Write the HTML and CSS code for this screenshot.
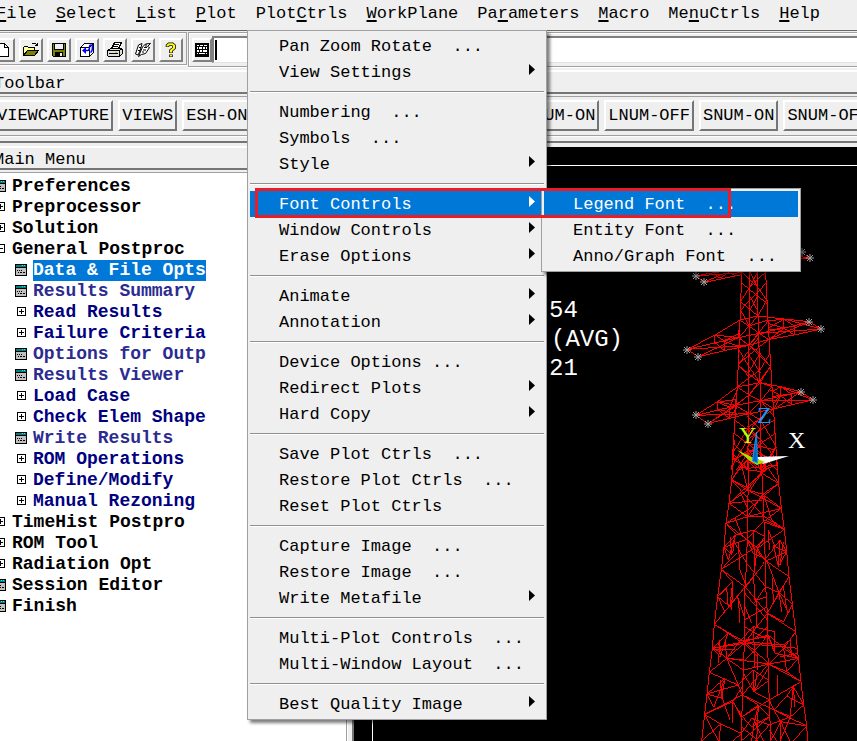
FILE: index.html
```html
<!DOCTYPE html>
<html lang="en">
<head>
<meta charset="utf-8">
<title>Postprocessor</title>
<link rel="stylesheet" href="styles.css">
</head>
<body>
<svg class="defs" aria-hidden="true">
  <symbol id="arrow" viewBox="0 0 6 11"><path d="M0 0 6 5.5 0 11z" fill="currentColor"/></symbol>
  <symbol id="form" viewBox="0 0 12 12" shape-rendering="crispEdges"><path fill="#000" d="M0 0h12v12H0z"/><path fill="#c0c0c0" d="M1 4h10v7H1z"/><path fill="#008080" d="M1 1h10v2H1z"/><path fill="#0ff" d="M7 1h1v1H7zM9 1h1v1H9z"/><path fill="#000" d="M2 6h1v1H2zM4 6h1v1H4zM6 6h1v1H6zM3 8h1v1H3zM5 8h2v1H5zM8 8h2v1H8z"/></symbol>
  <symbol id="plus" viewBox="0 0 12 12" shape-rendering="crispEdges"><path fill="none" stroke="#000" d="M2.5 1.5h8v8h-8zM4 5.5h5M6.500 3v5"/></symbol>
  <symbol id="minus" viewBox="0 0 12 12" shape-rendering="crispEdges"><path fill="none" stroke="#000" d="M2.5 1.500h8v8h-8zM4 5.500h5"/></symbol>
  <symbol id="star" viewBox="-5 -5 10 10" overflow="visible"><path fill="none" stroke="#a0a0a0" d="M-4 0h8M0-4v8M-3-3 3 3M3-3-3 3"/></symbol>
</svg>
<div class="app">
  <nav class="menubar" aria-label="Main">
    <a href="#"><u>F</u>ile</a><a href="#"><u>S</u>elect</a><a href="#"><u>L</u>ist</a><a href="#"><u>P</u>lot</a><a href="#">Plot<u>C</u>trls</a><a href="#"><u>W</u>orkPlane</a><a href="#">Pa<u>r</u>ameters</a><a href="#"><u>M</u>acro</a><a href="#">Me<u>n</u>uCtrls</a><a href="#"><u>H</u>elp</a>
  </nav>

  <div class="command-row">
    <div class="tools">
      <button class="tool" aria-label="New"><svg viewBox="0 0 18 18" shape-rendering="crispEdges"><path fill="#fff" stroke="#000" d="M3.500 2.500h7l4 4v9h-11zM10.500 2.500v4h4"/></svg></button>
      <button class="tool" aria-label="Open"><svg viewBox="0 0 18 18" shape-rendering="crispEdges"><path fill="#ff9" stroke="#000" d="M1.500 14.500v-8l1-1h3l1 1h6v3h-6z"/><path fill="#808000" stroke="#000" d="M1.500 14.500l4-5h11l-4 5z"/><path fill="none" stroke="#000" d="M9.500 3.500l1-1h3l2 2M15.500 2v3M13 4.500h3"/></svg></button>
      <button class="tool" aria-label="Save"><svg viewBox="0 0 18 18" shape-rendering="crispEdges"><path fill="#808000" stroke="#000" d="M2.500 2.500h13v13h-12l-1-1z"/><path fill="#efefef" stroke="#000" d="M4.500 2.500h9v6h-9z"/><path d="M5 11h8v5H5z"/><path fill="#efefef" d="M10 12h2v3h-2z"/></svg></button>
      <button class="tool" aria-label="Rotate view"><svg viewBox="0 0 18 18"><path fill="#fff" stroke="#000" shape-rendering="crispEdges" d="M2.500 6.500h9v9h-9zM2.500 6.500l4-4h9l-4 4M15.500 2.500v9l-4 4"/><path fill="none" stroke="#00f" stroke-width="1.500" d="M6 9.500h3.500c2 0 2-2 2-4 0-2 3-2 3 0 0 3 0 5-2 6"/><path fill="#00f" d="M4 9.500 8 6v7z"/></svg></button>
      <button class="tool" aria-label="Print"><svg viewBox="0 0 18 18" shape-rendering="crispEdges"><path fill="#fff" stroke="#000" d="M5.500 7.500l3-6h7l-3 6z"/><path fill="none" stroke="#000" d="M8 3.500h5M7 5.500h5"/><path fill="#ddd" stroke="#000" d="M1.500 9.500l3-2h11l1 1v4l-3 3h-11l-1-1zM1.500 9.500h12v5M13.500 9.500l3-2M3 12.500h9"/><path fill="#cc0" d="M9 11h2v1H9z"/></svg></button>
      <button class="tool" aria-label="Report"><svg viewBox="0 0 18 18"><path fill="#fff" stroke="#000" d="M4.500 4 8 2.500 6 10l-2 4-2.500-1zM8.500 6l3-3 5-.5-3 3 2 1-4 6-4 1-3 2z"/><path fill="none" stroke="#000" d="M5 6.500h2M4 9.500h2M10 6.500h3M9 9h3M8 11h2M12 3v3"/></svg></button>
      <button class="tool" aria-label="Help"><svg viewBox="0 0 18 18"><path fill="none" stroke="#000" stroke-width="3.500" d="M5.500 6V4.500L7 3.200h3.500L12 4.500V7L9 9.500V12M9 13.500V16"/><path fill="none" stroke="#ff0" stroke-width="2" d="M5.500 5.500v-1L7 3.200h3.500L12 4.500V7L9 9.500v2M9 14v1.500"/></svg></button>
    </div>
    <div class="command">
      <button class="tool" aria-label="Keyboard entry"><svg viewBox="0 0 18 18" shape-rendering="crispEdges"><path d="M1 1h16v16H1z"/><path fill="#fff" d="M3 3h3v2H3zM7 3h3v2H7zM11 3h4v2h-4zM3 6h2v2H3zM6 6h3v2H6zM10 6h2v2h-2zM13 6h2v2h-2zM3 9h3v2H3zM7 9h2v2H7zM10 9h3v2h-3zM14 9h1v2h-1zM3 12h2v2H3zM6 12h6v2H6zM13 12h2v2h-2z"/></svg></button>
      <div class="field"><span class="caret"></span><input type="text" aria-label="Command"></div>
    </div>
  </div>

  <h2 class="title">Toolbar</h2>
  <div class="toolbar">
    <button>VIEWCAPTURE</button><button>VIEWS</button><button>ESH-ON</button><button>ESH-OFF</button><button>NNUM-ON</button><button>NNUM-OFF</button><button>LNUM-ON</button><button>LNUM-OFF</button><button>SNUM-ON</button><button>SNUM-OFF</button>
  </div>
  <div class="groove"></div>

  <main class="work">
    <section class="side">
      <h2 class="title">Main Menu</h2>
      <ul class="tree">
        <li><svg><use href="#form"/></svg><span>Preferences</span></li>
        <li><svg><use href="#plus"/></svg><span>Preprocessor</span></li>
        <li><svg><use href="#plus"/></svg><span>Solution</span></li>
        <li><svg><use href="#minus"/></svg><span>General Postproc</span></li>
        <li class="child leaf selected"><svg><use href="#form"/></svg><span>Data &amp; File Opts</span></li>
        <li class="child leaf"><svg><use href="#form"/></svg><span>Results Summary</span></li>
        <li class="child"><svg><use href="#plus"/></svg><span>Read Results</span></li>
        <li class="child"><svg><use href="#plus"/></svg><span>Failure Criteria</span></li>
        <li class="child leaf"><svg><use href="#form"/></svg><span>Options for Outp</span></li>
        <li class="child leaf"><svg><use href="#form"/></svg><span>Results Viewer</span></li>
        <li class="child"><svg><use href="#plus"/></svg><span>Load Case</span></li>
        <li class="child"><svg><use href="#plus"/></svg><span>Check Elem Shape</span></li>
        <li class="child leaf"><svg><use href="#form"/></svg><span>Write Results</span></li>
        <li class="child"><svg><use href="#plus"/></svg><span>ROM Operations</span></li>
        <li class="child"><svg><use href="#plus"/></svg><span>Define/Modify</span></li>
        <li class="child"><svg><use href="#plus"/></svg><span>Manual Rezoning</span></li>
        <li><svg><use href="#plus"/></svg><span>TimeHist Postpro</span></li>
        <li><svg><use href="#plus"/></svg><span>ROM Tool</span></li>
        <li><svg><use href="#plus"/></svg><span>Radiation Opt</span></li>
        <li><svg><use href="#form"/></svg><span>Session Editor</span></li>
        <li><svg><use href="#form"/></svg><span>Finish</span></li>
      </ul>
    </section>
    <div class="divider"></div>
    <section class="graphics" aria-label="Graphics window">
      <div class="frame">
        <svg class="plot" viewBox="373 166 484 575">
          <g class="legend"><text x="549" y="317">54</text><text x="551" y="346">(AVG)</text><text x="549" y="375">21</text></g>
          <!-- tower head and cross-arms -->
          <g class="wire" transform="translate(660 240) scale(.33333)">
            <path d="M246 80 240 240 232 440 222 580 215 690M316 80 324 240 336 440 342 530 352 690M270 80 267 316 267 520 262 690M292 80 294 230 302 480 303 690"/>
            <path d="M246 97 292 140 320 180M316 97 270 140 242 185M246 130 320 190M318 130 242 210M242 185 294 228 320 180M242 210 267 258 324 240M270 97 292 140M292 97 270 140M270 170 292 210M292 170 270 210M240 240 298 280 327 300M324 240 267 258 237 293M267 258 298 280 267 316M294 228 267 258M240 240 235 293 267 316 324 243"/>
            <path d="M237 293 300 340 331 380M327 298 267 345 234 375M267 316 331 380 300 428M298 290 234 375 267 410M237 330 267 380 302 430M330 340 300 390 232 440M234 375 300 428 336 440M331 380 267 465M267 345 302 400M300 340 267 395"/>
            <path d="M232 441 267 465 302 482 342 507M336 440 302 482 267 521 226 496M232 441 226 496 267 521M300 428 267 465 226 496M302 482 342 530M226 496 302 540 348 620M340 507 267 560 218 640M224 540 303 600 350 660M342 540 262 600 216 680M222 580 303 640 352 690M345 580 262 640 230 690M262 560 303 600 262 650M303 560 262 620 303 690M262 530 303 570M303 530 262 580M218 640 262 690M348 620 303 690M217 660 303 620M350 650 262 670M240 690 262 660 290 690M320 690 303 660"/>
            <path d="M108 108 160 98 245 88M108 108 133 127 245 104M108 108 245 98M160 98 180 115 205 98 225 106M133 127 180 105M422 36 449 55 422 50M422 57 449 55"/>
            <path d="M82 328 165 285 240 240 293 228 372 237 448 245 484 267 403 285 327 298 267 316 193 332 115 350 82 328 190 303 235 293 298 280 402 258 448 245M82 328 267 316M115 350 235 293M484 267 372 237 324 243M484 267 298 280M448 245 327 298M165 285V308L193 332V303L165 285 237 293M190 303 240 320 267 316M372 237V265L403 285V258L372 237 324 265M327 298 372 265 324 250M240 280 190 303M324 270 372 265"/>
            <path d="M108 526 172 485 232 441 300 428 362 440 423 455 459 480 400 493 342 507 267 521 208 535 143 551 108 526 208 502 226 496 302 482 394 462 423 455M108 526 267 521M143 551 226 496M143 551 208 512 267 465M459 480 362 440 336 455M459 480 302 482M423 455 342 507M172 485V508L208 535V502L172 485 226 496M362 440V467L394 493V462L362 440M342 507 362 467 330 450M172 508 230 520M362 467 340 490M232 450 208 502M232 500 208 535M180 485 230 478M336 470 390 462"/>
          </g>
          <!-- tower body -->
          <g class="wire" transform="translate(680 440) scale(.33333)">
            <path d="M163 0 155 120 147 190 138 250 132 322 124 388 113 470 103 553 97 625 88 697 81 762 74 823 65 903M286 0 296 130 304 205 313 268 320 335 327 410 337 492 347 575 355 655 363 725 371 795 380 858 383 903M206 40 203 230 200 370 195 440 193 610 190 690 187 770 184 903M243 40 250 200 254 290 257 440 262 520 265 720 268 780 272 903"/>
            <path d="M161 10 206 60 243 90 293 75M290 20 245 95 206 145 155 120M163 60 206 85 290 75M163 60 206 30 286 60M185 78 206 90 245 95 265 85M243 10 185 78 155 120M286 30 206 10M155 120 185 75 203 150M296 130 265 85 245 100 203 160M245 100 296 130 248 163 203 150 155 120M147 190 203 150 304 205M147 190 245 100M296 130 203 210 138 250M155 120 250 228 313 268M147 190 203 230 248 163 304 205 203 230 138 250M304 205 250 245 200 298M147 190 245 180M248 163 304 205M313 268 250 228 203 230M180 155 205 210M250 160 275 240 313 268"/>
            <path d="M138 250 200 298 254 360 327 410M313 268 254 240 200 298 132 322M138 250 170 285 220 270 254 290M132 322 200 298 232 325 313 268M165 235 185 285 200 298M166 285 132 322 145 360 166 285 158 340M150 290 155 345 132 322M175 310 180 390 200 440M200 370 165 310M220 270 225 400M232 325 254 360 285 320 320 335M265 270 268 330M254 290 232 325 222 400M285 320 320 335 295 380 300 300 320 335M265 270 285 320 300 300M280 315 295 380M310 305 300 375M200 298 220 340 254 355M170 340 124 388M250 245 313 268"/>
            <path d="M124 388 195 440 262 520 347 575M327 410 262 520 193 610 97 625M124 388 200 340 254 300M103 553 195 440 254 365 320 335M124 388 158 425 113 470 135 515M158 425 150 500 113 470 140 445 145 505M158 425 155 510M172 470 193 530M175 475 180 550M172 470 130 520M200 370 225 400 257 440 222 490M220 400 225 480M277 415 280 485M257 440 297 458 337 492M297 458 262 520M297 458 325 520 337 492M297 458 305 515M310 440 320 510M327 410 297 458M195 440 230 480 262 470M230 480V560M262 520 311 545 337 492M260 360 297 458M172 470 195 440 220 410M195 500 215 550M193 540 262 500M195 460 262 540"/>
            <path d="M103 553 145 578 193 605 265 585 311 625 355 655M347 575 311 625 268 672 190 690M97 625 145 578 120 650 97 625M97 625 193 605 311 615M97 620 140 655 190 690M140 655 180 603 220 560 285 575M140 655 193 610 232 650M97 630 165 630M88 697 140 655 268 672 355 655M193 605 268 672M265 585 193 660 140 655M220 560 225 680M232 640V690M262 585 285 640M285 575V640M311 625 320 695M311 615 330 600 347 575M311 615 355 655 285 640 265 585M330 600 335 650M193 610 355 625M103 553 180 603 262 590M115 610 125 640M120 600 115 670M135 600 140 655M300 650 355 640M193 560 245 590M262 560 220 600"/>
            <path d="M88 697 175 735 187 765 282 810 380 858M363 725 268 780 187 830M355 655 320 695 265 672 187 765 74 823M88 697 140 655 175 735M81 762 135 715 125 775 81 762 100 800M135 715 102 800M120 720 127 775M81 762 175 735 220 690 265 720M220 690 222 755 268 720M232 695 222 755M292 705V765M265 672 363 725M320 695 363 725 340 740 371 795 320 768 340 740 345 800M340 740 330 830M320 768 282 810 268 780M190 690 187 765M187 740 155 790M97 625 88 697M268 680 222 755 268 780M190 700 222 755"/>
            <path d="M74 823 158 785 187 830 215 860 268 830 235 795 187 830M158 785V850M160 785 187 840M74 823 122 852 184 880 215 835 268 855M371 795 332 830 268 855 225 903M380 858 302 845 272 903M332 830 300 903M74 823 115 903M122 852 65 903M122 852 117 903M187 765 235 795 222 850 215 903M235 795 230 903M302 845V903M282 810 302 845 330 903M380 858 340 903M150 840 125 770M184 880 160 903M268 830 184 903M220 835 250 903M184 860 235 903M268 870 290 903M282 810 332 830"/>
          </g>
          <g class="nodes"><use href="#star" x="691" y="271" width="10" height="10"/><use href="#star" x="699" y="277" width="10" height="10"/><use href="#star" x="797" y="247" width="10" height="10"/><use href="#star" x="805" y="253" width="10" height="10"/><use href="#star" x="682" y="345" width="10" height="10"/><use href="#star" x="693" y="352" width="10" height="10"/><use href="#star" x="804" y="317" width="10" height="10"/><use href="#star" x="816" y="324" width="10" height="10"/><use href="#star" x="691" y="410" width="10" height="10"/><use href="#star" x="703" y="419" width="10" height="10"/><use href="#star" x="796" y="387" width="10" height="10"/><use href="#star" x="808" y="395" width="10" height="10"/></g>
          <path fill="#fff" d="M756 457 789 456 763 464z"/>
          <path fill="#ad0" d="M737 450 752 457 765 462 757 465 750 461z"/>
          <path fill="#06b" stroke="#19f" d="M752.500 461 756.500 432 757.500 463z"/>
          <g class="axis"><text class="z" x="757" y="423">Z</text><text class="y" x="739" y="443">Y</text><text x="788" y="448">X</text></g>
        </svg>
      </div>
    </section>
  </main>

  <ul class="menu dropdown" role="menu">
    <li>Pan Zoom Rotate  ...</li>
    <li>View Settings<svg><use href="#arrow"/></svg></li>
    <li class="rule"></li>
    <li>Numbering  ...</li>
    <li>Symbols  ...</li>
    <li>Style<svg><use href="#arrow"/></svg></li>
    <li class="rule"></li>
    <li class="active">Font Controls<svg><use href="#arrow"/></svg>
      <ul class="menu submenu" role="menu"><li class="active">Legend Font  ...</li><li>Entity Font  ...</li><li>Anno/Graph Font  ...</li></ul>
      <span class="marker"></span></li>
    <li>Window Controls<svg><use href="#arrow"/></svg></li>
    <li>Erase Options<svg><use href="#arrow"/></svg></li>
    <li class="rule"></li>
    <li>Animate<svg><use href="#arrow"/></svg></li>
    <li>Annotation<svg><use href="#arrow"/></svg></li>
    <li class="rule"></li>
    <li>Device Options ...</li>
    <li>Redirect Plots<svg><use href="#arrow"/></svg></li>
    <li>Hard Copy<svg><use href="#arrow"/></svg></li>
    <li class="rule"></li>
    <li>Save Plot Ctrls  ...</li>
    <li>Restore Plot Ctrls  ...</li>
    <li>Reset Plot Ctrls</li>
    <li class="rule"></li>
    <li>Capture Image  ...</li>
    <li>Restore Image  ...</li>
    <li>Write Metafile<svg><use href="#arrow"/></svg></li>
    <li class="rule"></li>
    <li>Multi-Plot Controls  ...</li>
    <li>Multi-Window Layout  ...</li>
    <li class="rule"></li>
    <li>Best Quality Image<svg><use href="#arrow"/></svg></li>
  </ul>
</div>
</body>
</html>
```
FILE: styles.css
```css
* { box-sizing: border-box; }

body {
  margin: 0;
  background: #efefef;
  color: #000;
  font: 17px/26px "Liberation Mono", monospace;
  overflow: hidden;
}

ul { list-style: none; margin: 0; padding: 0; }
button, input { font: inherit; color: inherit; }
.defs { position: absolute; width: 0; height: 0; }

.app {
  position: relative;
  display: flex;
  flex-direction: column;
  min-height: 100vh;
}

.menubar {
  display: flex;
  gap: 19px;
  height: 31px;
  padding-top: 1px;
  margin-left: -4px;
  border-bottom: 1px solid #696969;
}
.menubar a { color: inherit; text-decoration: none; }
.menubar u { text-decoration-thickness: 2px; text-underline-offset: 2px; }

.command-row { display: flex; gap: 1px; height: 37px; padding-top: 1px; }
.tools, .command {
  display: flex;
  border: 1px solid #a0a0a0;
  box-shadow: inset 1px 1px #fff, 0 1px #fff;
}
.tools { gap: 4px; height: 33px; margin-left: -10px; padding: 5px 3px 0 0; }
.command { flex: 1; height: 35px; padding: 3px 0 0 3px; border-right: 0; }

.tool {
  width: 24px;
  height: 24px;
  padding: 1px;
  background: #efefef;
  border: 2px solid;
  border-color: #fff #808080 #808080 #fff;
}
.tool svg { display: block; width: 18px; height: 18px; }
.command .tool { flex: none; margin-top: 2px; width: 20px; padding: 0; }
.command .tool svg { width: 16px; }
.tools .tool { flex: none; }

.field {
  display: flex;
  flex: 1;
  height: 27px;
  padding: 2px 1px;
  background: #fff;
  border-top: 2px solid #808080;
  border-left: 2px solid #808080;
  border-bottom: 1px solid #e3e3e3;
}
.caret { width: 2px; height: 20px; background: #000; }
.field input { flex: 1; min-width: 0; padding: 0; border: 0; outline: 0; background: none; }

.title {
  height: 24px;
  margin: 2px 0;
  border-top: 2px solid #fff;
  border-bottom: 2px solid #757575;
  font-size: 17px;
  font-weight: normal;
  line-height: 23px;
  text-indent: -6px;
}

.toolbar {
  display: flex;
  gap: 5px;
  padding: 3px 0 4px;
  margin-left: -7px;
  overflow: hidden;
  border-top: 1px solid #a0a0a0;
  border-bottom: 1px solid #a0a0a0;
}
.toolbar button {
  flex: none;
  height: 31px;
  padding: 0 2px;
  background: #efefef;
  border: 2px solid;
  border-color: #fff #757575 #757575 #fff;
}
.groove { height: 7px; border-top: 1px solid #fff; border-bottom: 2px solid #757575; }

.work { display: flex; flex: 1; }
.side { display: flex; flex-direction: column; width: 347px; border-right: 1px solid #a0a0a0; }
.side .title { margin-top: 3px; }
.tree {
  flex: 1;
  padding-top: 3px;
  background: #fff;
  border-top: 1px solid #a0a0a0;
  font-size: 18px;
  font-weight: bold;
  line-height: 21px;
}
.tree li { display: flex; gap: 6px; margin-left: -6px; }
.tree svg { width: 12px; height: 12px; margin-top: 4px; }
.tree .child { margin-left: 15px; color: #000080; }
.tree .leaf { color: #2b2b90; }
.tree .selected span { background: #0078d7; color: #fff; }

.divider {
  width: 7px;
  border-left: 1px solid #fff;
  border-right: 2px solid #757575;
}

.graphics {
  flex: 1;
  min-width: 0;
  margin-top: 4px;
  padding: 18px 0 0 18px;
  background: #000;
  overflow: hidden;
}
.frame { height: 100%; border-top: 1px solid #fff; border-left: 1px solid #fff; }
.plot { display: block; width: 484px; height: 575px; }
.plot .wire { fill: none; stroke: #f00; stroke-width: 3; shape-rendering: crispEdges; }
.legend, .axis { fill: #fff; font-size: 24px; }
.axis { font-family: "Liberation Serif", serif; }
.axis .z { fill: #19f; }
.axis .y { fill: #bf0; }

.menu {
  position: absolute;
  padding: 2px;
  background: #efefef;
  color: #000;
  border: 1px solid #a0a0a0;
  box-shadow: 3px 3px 3px rgba(0, 0, 0, .5);
  white-space: normal;
}
.menu li {
  display: flex;
  justify-content: space-between;
  height: 26px;
  padding: 1px 9px 0 29px;
  white-space: pre;
}
.menu li > svg { width: 6px; height: 11px; margin-top: 4px; }
.menu .rule { height: 1px; margin: 6px 0 7px; padding: 0; background: #909090; box-shadow: 0 1px #fff; }
.menu .active { background: #0078d7; color: #fff; }

.dropdown { top: 30px; left: 247px; width: 300px; }
.dropdown > .active { position: relative; margin-right: 2px; padding-right: 7px; }
.submenu { top: -3px; left: 291px; width: 260px; }
.submenu li { color: #000; }
.marker {
  position: absolute;
  top: -3px;
  left: 5px;
  width: 476px;
  height: 30px;
  border: 3px solid #ed1c24;
}
```
